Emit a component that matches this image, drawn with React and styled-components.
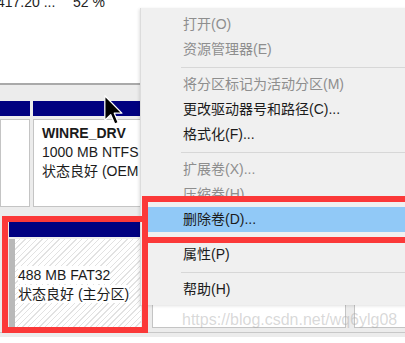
import React from "react";
import styled, { createGlobalStyle } from "styled-components";

const GlobalStyle = createGlobalStyle`
  html, body {
    margin: 0;
    padding: 0;
    background: #ffffff;
  }
`;

const FONT = `"Liberation Sans", "Noto Sans CJK SC", sans-serif`;

const menuItems = [
  { label: "打开(O)", disabled: true },
  { label: "资源管理器(E)", disabled: true },
  { sep: true },
  { label: "将分区标记为活动分区(M)", disabled: true },
  { label: "更改驱动器号和路径(C)..." },
  { label: "格式化(F)..." },
  { sep: true },
  { label: "扩展卷(X)...", disabled: true },
  { label: "压缩卷(H)", disabled: true },
  { label: "删除卷(D)...", active: true },
  { sep: true },
  { label: "属性(P)" },
  { sep: true },
  { label: "帮助(H)" },
];

function Dashboard() {
  return (
    <Screen>
      <TopPane>
        <SummaryRow>
          <SummaryCell $w={76}>417.20 ...</SummaryCell>
          <SummaryCell>52 %</SummaryCell>
        </SummaryRow>
      </TopPane>
      <Divider />
      <DiskArea>
        <DiskRow>
          <Partition $w={30}>
            <PartBar />
            <PartBody />
          </Partition>
          <Partition $w={260}>
            <PartBar />
            <PartBody>
              <PartName>WINRE_DRV</PartName>
              <PartLine>1000 MB NTFS</PartLine>
              <PartLine>状态良好 (OEM 分区)</PartLine>
            </PartBody>
          </Partition>
        </DiskRow>
        <DiskRow $second>
          <Partition $w={132}>
            <PartBar />
            <HatchBody>
              <HatchLabel>488 MB FAT32</HatchLabel>
              <HatchLabel>状态良好 (主分区)</HatchLabel>
            </HatchBody>
          </Partition>
          <Partition $w={194} $gap={8}>
            <PartBar />
            <PartBody />
          </Partition>
          <Partition $w={60} $gap={5}>
            <PartBar />
            <PartBody />
          </Partition>
        </DiskRow>
        <BottomStrip />
      </DiskArea>

      <ContextMenu>
        {menuItems.map((it, i) =>
          it.sep ? (
            <MenuSep key={i} />
          ) : (
            <MenuItem key={i} $disabled={it.disabled} $active={it.active}>
              {it.label}
            </MenuItem>
          )
        )}
      </ContextMenu>

      <Watermark>https://blog.csdn.net/wq6ylg08</Watermark>

      <RedFrame $left={2} $top={216} $w={146} $h={117} />
      <RedFrame $left={142} $top={196} $w={270} $h={47} />

      <Cursor width="19" height="30" viewBox="0 0 12 19">
        <path
          d="M0.5 0.5 L0.5 16 L4.2 12.4 L6.8 18.4 L9 17.4 L6.5 11.5 L11.3 11.5 Z"
          fill="#000"
          stroke="#fff"
          strokeWidth="0.8"
          strokeLinejoin="round"
        />
      </Cursor>
    </Screen>
  );
}

const Screen = styled.div`
  position: relative;
  width: 405px;
  height: 343px;
  overflow: hidden;
  font-family: ${FONT};
  font-size: 14px;
  color: #1b1b1b;
  background: #ffffff;
`;

const TopPane = styled.div`
  height: 89px;
  background: #ffffff;
`;

const SummaryRow = styled.div`
  display: flex;
  margin-top: -6px;
  margin-left: -3px;
  line-height: 16px;
  color: #222;
`;

const SummaryCell = styled.span`
  width: ${(p) => (p.$w ? `${p.$w}px` : "auto")};
  white-space: nowrap;
`;

const Divider = styled.div`
  height: 2px;
  background: #a9a9a9;
`;

const DiskArea = styled.div`
  background: #ececec;
  padding-top: 16px;
  height: 236px;
`;

const DiskRow = styled.div`
  display: flex;
  margin-top: ${(p) => (p.$second ? "15px" : "0")};
  padding-left: ${(p) => (p.$second ? "9px" : "0")};
  gap: 3px;
`;

const Partition = styled.div`
  flex: 0 0 ${(p) => p.$w}px;
  margin-left: ${(p) => (p.$gap ? `${p.$gap}px` : "0")};
  display: flex;
  flex-direction: column;
`;

const PartBar = styled.div`
  height: 15px;
  background: #000080;
`;

const PartBody = styled.div`
  margin-top: 3px;
  height: 88px;
  background: #ffffff;
  border: 1px solid #c4c4c4;
  box-sizing: border-box;
  padding: 4px 0 0 8px;
  white-space: nowrap;
  line-height: 19px;
`;

const PartName = styled.div`
  font-weight: bold;
`;

const PartLine = styled.div``;

const HatchBody = styled.div`
  margin-top: 2px;
  height: 88px;
  box-sizing: border-box;
  border-left: 6px solid #b9b9b9;
  background: repeating-linear-gradient(
    135deg,
    #ffffff 0px,
    #ffffff 3px,
    #e2e2e2 3px,
    #e2e2e2 4px
  );
  padding: 27px 0 0 3px;
  display: flex;
  flex-direction: column;
  align-items: flex-start;
  gap: 1px;
`;

const HatchLabel = styled.span`
  background: #ffffff;
  line-height: 18px;
  white-space: nowrap;
`;

const BottomStrip = styled.div`
  margin-top: 4px;
  height: 1px;
  background: #c8c8c8;
`;

const ContextMenu = styled.div`
  position: absolute;
  left: 140px;
  top: 8px;
  width: 280px;
  box-sizing: border-box;
  padding: 4px 0 3px 2px;
  background: #f0f0f0;
  border-left: 1px solid #dcdcdc;
  box-shadow: -1px 1px 3px rgba(0, 0, 0, 0.12);
`;

const MenuItem = styled.div`
  height: 25px;
  line-height: 25px;
  padding-left: 40px;
  white-space: nowrap;
  color: ${(p) => (p.$disabled ? "#8e8e8e" : "#1b1b1b")};
  background: ${(p) => (p.$active ? "#91c9f7" : "transparent")};
`;

const MenuSep = styled.div`
  height: 10px;
  margin-left: 38px;
  display: flex;
  align-items: center;

  &::after {
    content: "";
    flex: 1;
    height: 1px;
    background: #d7d7d7;
  }
`;

const Watermark = styled.div`
  position: absolute;
  left: 182px;
  top: 310px;
  font-family: "Liberation Sans", sans-serif;
  font-size: 16px;
  line-height: 20px;
  color: rgba(170, 170, 170, 0.45);
  white-space: nowrap;
`;

const RedFrame = styled.div`
  position: absolute;
  left: ${(p) => p.$left}px;
  top: ${(p) => p.$top}px;
  width: ${(p) => p.$w}px;
  height: ${(p) => p.$h}px;
  box-sizing: border-box;
  border: 6px solid #fb3939;
`;

const Cursor = styled.svg`
  position: absolute;
  left: 104px;
  top: 95px;
`;

export default function App() {
  return (
    <>
      <GlobalStyle />
      <Dashboard />
    </>
  );
}
